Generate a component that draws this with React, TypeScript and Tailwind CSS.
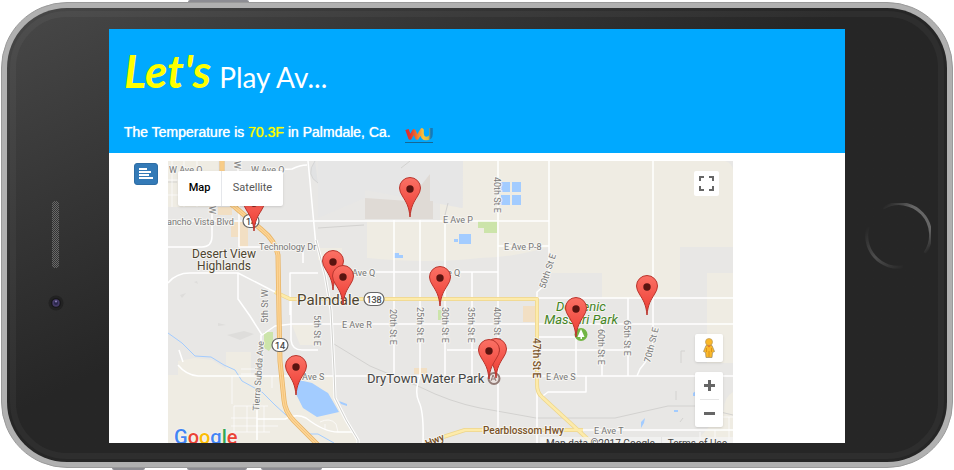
import React from "react";

type Point = [number, number];

const pins: Point[] = [
  [254, 231],
  [410, 217],
  [333, 290],
  [343, 305],
  [440, 306],
  [647, 315],
  [576, 337],
  [296, 395],
  [496, 378],
  [489, 379],
];

type Label = { text: string; x: number; y: number; size?: number; angle?: number; fill?: string; anchor?: "start" | "middle"; weight?: number };

const labels: Label[] = [
  { text: "W Ave O", x: 169, y: 173 },
  { text: "W Ave O", x: 251, y: 173 },
  { text: "W", x: 234, y: 161, angle: 90 },
  { text: "W", x: 209, y: 206, angle: 90 },
  { text: "ancho Vista Blvd", x: 167, y: 225 },
  { text: "Technology Dr", x: 259, y: 250 },
  { text: "E Ave P", x: 443, y: 223 },
  { text: "E Ave P-8", x: 504, y: 250 },
  { text: "Ave Q", x: 352, y: 276 },
  { text: "e Q", x: 447, y: 276 },
  { text: "E Ave R", x: 342, y: 328 },
  { text: "Ave S", x: 302, y: 380 },
  { text: "E Ave S", x: 546, y: 380 },
  { text: "E Ave T", x: 594, y: 434 },
  { text: "5th St W", x: 268, y: 323, angle: -90 },
  { text: "Tierra Subida Ave", x: 259, y: 411, angle: -86 },
  { text: "5th St E", x: 314, y: 315, angle: 90 },
  { text: "20th St E", x: 390, y: 309, angle: 90 },
  { text: "25th St E", x: 417, y: 307, angle: 90 },
  { text: "30th St E", x: 442, y: 307, angle: 90 },
  { text: "35th St E", x: 468, y: 307, angle: 90 },
  { text: "40th St E", x: 494, y: 307, angle: 90 },
  { text: "40th St E", x: 494, y: 177, angle: 90 },
  { text: "50th St E", x: 545, y: 289, angle: -72 },
  { text: "60th St E", x: 598, y: 329, angle: 90 },
  { text: "65th St E", x: 624, y: 320, angle: 90 },
  { text: "70th St E", x: 650, y: 363, angle: -76 },
  { text: "47th St E", x: 533, y: 338, angle: 90, fill: "#7a5226", size: 10, weight: 500 },
  { text: "Pearblossom Hwy", x: 483, y: 434, fill: "#7a5226", size: 10, weight: 500 },
  { text: "Hwy", x: 427, y: 447, angle: -22, fill: "#7a5226", size: 10, weight: 500 },
  { text: "Desert View", x: 224, y: 258, size: 12, fill: "#4e4530", anchor: "middle" },
  { text: "Highlands", x: 224, y: 270, size: 12, fill: "#4e4530", anchor: "middle" },
  { text: "Palmdale", x: 297, y: 305, size: 15, fill: "#4e4530" },
  { text: "DryTown Water Park", x: 367, y: 383, size: 13, fill: "#444444" },
];

const whiteRoads = [
  "M168 221H549",
  "M212 205V236Q212 247 202 247H168",
  "M239 205V247H264",
  "M168 283Q176 273 190 273H238L275 292L290 299",
  "M238 273V299L250 316L262 335L275 326L292 324H733",
  "M238 161V171M268 170L292 169Q300 165 307 165",
  "M308 161L316 246",
  "M303 247V263M290 315V273H318M291 299V340Q292 350 302 350H318",
  "M350 272H498M498 246H549M537 298H733M447 350H630",
  "M262 376H733M583 430H733",
  "M394 220V376M420 220V376M445 220V376M472 272V376M498 161V428",
  "M549 161V272Q548 284 537 292V443",
  "M576 334V376M537 337H576M602 324V376M628 298V376",
  "M653 161V342Q651 357 640 369L637 376",
  "M586 376V392H548L540 398",
  "M261 335V376M257 410V440M257 419H285Q296 413 306 418Q324 432 338 432H353",
  "M420 376Q414 392 419 402Q424 412 423 443",
  "M178 365Q186 375 198 376H262M179 350L183 362",
];

const thinRoads = [
  "M172 161V207M184 161V207M197 161V207M168 180H213M168 195H213",
  "M231 418H257M231 426H278M231 432H270M234 406V432M247 406V432M264 406V432M234 406H268",
  "M272 376V388M241 369H260M241 374H260M232 376V404",
  "M700 443V432M729 417V443M715 430V443M718 417H733",
  "M320 422Q330 417 336 424L338 432M325 424V429",
];

const railroad = "M316 240L325 275L331 310L334 370L335 398L346 420L358 440V451";
const arterial = "M275 292L290 299H537V384Q537 393 542 397L592 443M443 437L465 430H583";
const freeway = "M222 161V188Q223 199 236 208L262 230Q275 240 278 255L279 315L280 361L284 400Q285 412 294 421L318 445";

function Pin({ x, y }: { x: number; y: number }) {
  return (
    <g transform={`translate(${x} ${y})`}>
      <path
        d="M0 0C-1 -11 -4 -15 -7 -20Q-10.500 -25 -10.500 -29A10.500 10.500 0 1 1 10.500 -29Q10.500 -25 7 -20C4 -15 1 -11 0 0Z"
        fill="url(#pinFill)"
        stroke="#b9352d"
      />
      <circle cy="-28" r="3.700" fill="#5a1410" />
    </g>
  );
}

function Shield({ x, y, text, w }: { x: number; y: number; text: string; w: number }) {
  return (
    <g>
      <rect x={x - w / 2} y={y - 6.5} width={w} height="13" rx="6.500" fill="#fff" stroke="#666" strokeWidth="1.200" />
      <text x={x} y={y + 3.5} textAnchor="middle" fontSize="9" fill="#444" stroke="#444" strokeWidth=".2">{text}</text>
    </g>
  );
}

function MapDrawing() {
  return (
    <svg
      className="block h-full w-full font-['Roboto',sans-serif]"
      viewBox="168 161 565 290"
      preserveAspectRatio="xMidYMin slice"
      role="img"
      aria-label="Map of Palmdale with park locations"
    >
      <defs>
        <linearGradient id="pinFill" x1="0" y1="0" x2="0" y2="1">
          <stop offset="0" stopColor="#fb7165" />
          <stop offset="1" stopColor="#ec3a31" />
        </linearGradient>
      </defs>
      <rect x="168" y="161" width="565" height="290" fill="#e8e7e5" />
      <g fill="#efece3">
        <path d="M168 161H218V207H168Z" />
        <path d="M178 361L195 358L212 360L226 369V352H251V376H334L336 400L346 420L358 443V451H168V375H178Z" />
        <path d="M463 161H733V298H602V273H549V247Q510 258 480 258Q430 264 367 258V222H440V203L463 208Z" />
        <path d="M707 298H733V363H707ZM733 392Q724 397 724 410L700 437V443H733Z" />
        <path d="M292 325H318V345H300Z M318 248H342V260H318Z" />
      </g>
      <path d="M680 247H733V273H707V298H680ZM725 161H733V170Q732 163 725 161Z" fill="#e8e7e5" />
      <path d="M318 161H463L462 208L365 190V198L318 218Z" fill="#e6e6e6" />
      <path d="M365 198L409 201L430 174V201H433V219H365Z" fill="#dfdad5" />
      <path d="M315 161Q305 175 318 183" fill="#e1e2e3" stroke="#d5d5d5" />
      <g fill="#f2dfc3">
        <path d="M218 207H232V215H218ZM231 222H248V247H239V237H231Z" />
        <path d="M414 368H427V374H414ZM523 306H536V322H523Z" />
      </g>
      <path d="M264 332H273V345L269 351L264 348ZM478 221H497V233H484V228H478ZM438 310H442V320H438Z" fill="#cce4aa" />
      <g fill="#a3ccff">
        <path d="M501 182H510V192H501ZM512 182H521V192H512ZM501 195H510V205H501ZM512 195H521V205H512Z" />
        <path d="M459 234H471V244H459ZM454 239H458V242H454ZM394 253H399V255H403V258H394Z" />
        <path d="M299 380L312 383L323 390L328 393L339 412L317 417L303 408L296 394Z" />
        <path d="M339 401L347 404V406L341 404Z" />
        <path d="M674 410H678V412H674ZM693 393L696 391V396H693ZM641 422L645 418L644 423L641 428Z" />
      </g>
      <path d="M168 333L182 343L195 356L211 357L224 365L235 370L242 381L262 392L275 405L286 415L300 424L310 434L318 434L334 443" fill="none" stroke="#a3ccff" />
      <g fill="#dedddb">
        <path d="M227 335L244 331L254 334L240 340ZM218 323L226 325L218 326ZM180 295L186 293L182 298ZM194 282L197 281L198 284Z" />
      </g>
      <g fill="none" stroke="#d3d2d0">
        <path d="M168 182H177M401 168L410 161M318 228L364 225M444 219L448 203" />
        <path d="M334 344L370 366L420 387Q450 402 480 408L536 418H615L668 406H695L733 415" />
        <path d="M681 363V351H685M676 391V400M680 422L683 418" />
      </g>
      <g fill="none" stroke="#fff">
        {thinRoads.map((d) => <path key={d} d={d} strokeWidth=".7" />)}
        {whiteRoads.map((d) => <path key={d} d={d} strokeWidth="1.500" strokeLinejoin="round" />)}
      </g>
      <path d={railroad} fill="none" stroke="#fff" strokeWidth="3" />
      <path d={railroad} fill="none" stroke="#cfcfcc" />
      <g fill="none" strokeLinejoin="round">
        <path d={arterial} stroke="#ecd58c" strokeWidth="4" />
        <path d={arterial} stroke="#fdebaa" strokeWidth="2.500" />
        <path d={freeway} stroke="#e8b568" strokeWidth="5" />
        <path d={freeway} stroke="#fdd596" strokeWidth="3.400" />
        <path d={freeway} stroke="#eeb969" strokeWidth=".6" />
      </g>
      <g paintOrder="stroke" stroke="#f5f4f1" strokeWidth="2" strokeLinejoin="round">
        {labels.map((l) => (
          <text
            key={`${l.text}-${l.x}-${l.y}`}
            transform={`translate(${l.x} ${l.y}) rotate(${l.angle ?? 0})`}
            fontSize={l.size ?? 9}
            fontWeight={l.weight ?? 400}
            fill={l.fill ?? "#777777"}
            textAnchor={l.anchor ?? "start"}
          >
            {l.text}
          </text>
        ))}
        <g fill="#43841f" fontStyle="italic" fontSize="13" textAnchor="middle">
          <text x="581" y="311">Domenic</text>
          <text x="581" y="324">Massari Park</text>
        </g>
      </g>
      <Shield x={251} y={221} w={16} text="14" />
      <Shield x={280} y={345} w={16} text="14" />
      <Shield x={374} y={299} w={20} text="138" />
      <circle cx="581" cy="334.500" r="6.500" fill="#72b544" />
      <path d="M581 329L577.500 337H580.500V339H582V337H584.500Z" fill="#fff" />
      <circle cx="494" cy="378.500" r="5.500" fill="#e9e1de" stroke="#927b76" strokeWidth="2" />
      <path d="M491 381L493 375L496 381M492 379H496" fill="none" stroke="#927b76" />
      {pins.map(([x, y]) => <Pin key={`${x}-${y}`} x={x} y={y} />)}
    </svg>
  );
}

function ParkMap() {
  return (
    <div className="relative mr-28 h-[290px] min-w-0 flex-1 overflow-hidden font-['Roboto',sans-serif]">
      <MapDrawing />
      <div className="absolute top-[10px] left-[10px] flex h-[35px] rounded-xs bg-white text-[11px] shadow-sm">
        <button type="button" className="w-[44px] border-r border-gray-200 font-medium text-black">Map</button>
        <button type="button" className="w-[61px] text-[#565656]">Satellite</button>
      </div>
      <button type="button" aria-label="Toggle fullscreen" className="absolute top-[10px] right-[14px] flex size-[25px] items-center justify-center rounded-xs bg-white">
        <svg className="size-[15px]" viewBox="0 0 15 15" fill="none" stroke="#666" strokeWidth="2" aria-hidden="true">
          <path d="M1 5V1H5M10 1H14V5M14 10V14H10M5 14H1V10" />
        </svg>
      </button>
      <div className="absolute right-[10px] bottom-[24px] flex w-[28px] flex-col gap-[10px]">
        <button type="button" aria-label="Street View" className="flex h-[28px] items-center justify-center rounded-xs bg-white shadow-sm">
          <svg className="h-[20px] w-[12px]" viewBox="0 0 12 20" aria-hidden="true">
            <path d="M3 7.500Q6 6 9 7.500L11.500 13.500L9.500 14.500L9 19.500H3L2.500 14.500L.5 13.500Z" fill="#fbb829" stroke="#9c8a62" strokeWidth=".7" />
            <circle cx="6" cy="4" r="3.500" fill="#fbb829" stroke="#b89a5c" strokeWidth=".7" />
            <path d="M4 7.500H8L6 9.500Z" fill="#e67525" />
            <path d="M6 13V19M3.500 10V14M8.500 10V14" stroke="#d28a1b" strokeWidth=".8" />
          </svg>
        </button>
        <div className="flex h-[55px] flex-col items-center rounded-xs bg-white shadow-sm">
          <button type="button" aria-label="Zoom in" className="flex w-full flex-1 items-center justify-center">
            <svg className="size-[11px]" viewBox="0 0 11 11" stroke="#666" strokeWidth="3" aria-hidden="true"><path d="M0 5.500H11M5.500 0V11" /></svg>
          </button>
          <span className="h-px w-[19px] bg-[#e6e6e6]" />
          <button type="button" aria-label="Zoom out" className="flex w-full flex-1 items-center justify-center">
            <svg className="size-[11px]" viewBox="0 0 11 11" stroke="#666" strokeWidth="3" aria-hidden="true"><path d="M0 5.500H11" /></svg>
          </button>
        </div>
      </div>
      <a href="#google" aria-label="Google" className="absolute bottom-0 left-[6px] text-[20px] leading-[28px] font-medium [text-shadow:0_0_2px_white]">
        <span className="text-[#4285f4]">G</span><span className="text-[#ea4335]">o</span><span className="text-[#fbbc05]">o</span><span className="text-[#4285f4]">g</span><span className="text-[#34a853]">l</span><span className="text-[#ea4335]">e</span>
      </a>
      <div className="absolute right-0 bottom-0 flex h-[14px] bg-[#f5f5f5]/70 text-[10px] leading-[14px] text-[#444]">
        <span className="px-[6px]">Map data ©2017 Google</span>
        <a href="#terms" className="border-l border-[#e4e4e4] px-[6px]">Terms of Use</a>
      </div>
    </div>
  );
}

function AppScreen() {
  return (
    <main className="h-[414px] min-w-0 flex-1 overflow-hidden bg-white">
      <header className="h-[124px] bg-[#00a9ff] px-[15px] pt-3">
        <h1 className="flex items-baseline gap-2 font-['Lato',sans-serif] leading-[60px] whitespace-nowrap text-white">
          <span className="text-[46px] font-bold text-[#ffff00] italic">Let's</span>
          <span className="text-[28px]">Play Av...</span>
        </h1>
        <p className="mt-[13px] flex items-center gap-[14px] font-['Liberation_Sans',sans-serif] text-[14px] leading-[20px] text-white [text-shadow:0_0_1px_currentColor]">
          <span>The Temperature is <span className="text-[#ffff00]">70.3F</span> in Palmdale, Ca.</span>
          <svg className="mt-[6px] h-[18px] w-[28px]" viewBox="0 0 28 18" fill="none" role="img" aria-label="Weather Underground">
            <defs>
              <linearGradient id="wuWave" x1="0" x2="28" gradientUnits="userSpaceOnUse">
                <stop offset="0" stopColor="#d92b32" />
                <stop offset=".2" stopColor="#e2382f" />
                <stop offset=".4" stopColor="#f0702f" />
                <stop offset=".65" stopColor="#f9c33b" />
                <stop offset=".83" stopColor="#dcb83f" />
                <stop offset=".92" stopColor="#1479ba" />
              </linearGradient>
            </defs>
            <path d="M2 3.500L5 12L9 5L12 12L17 4V8Q17.500 12.500 21 12.500Q26 12.500 26 8V2" stroke="url(#wuWave)" strokeWidth="3.600" strokeLinejoin="round" />
            <path d="M0 16.500H28" stroke="#176794" />
          </svg>
        </p>
      </header>
      <div className="flex items-start gap-[10px] pt-2 pl-[25px]">
        <button type="button" aria-label="Show list" className="mt-[2px] flex h-[22px] w-[24px] items-center justify-center rounded-[3px] border border-[#2e6da4] bg-[#337ab7]">
          <svg className="h-[12px] w-[14px]" viewBox="0 0 14 12" fill="#fff" aria-hidden="true">
            <path d="M0 0H8V2H0ZM0 3H12V5H0ZM0 6H10V8H0ZM0 9H14V11H0Z" />
          </svg>
        </button>
        <ParkMap />
      </div>
    </main>
  );
}

export default function App() {
  return (
    <div className="overflow-hidden bg-white">
      <div className="flex h-[2px] pl-[188px]">
        <span className="w-[61px] rounded-t-xs bg-[#8d8d93]" />
      </div>
      <div className="mx-px rounded-[66px] border border-[#9a9a9a] bg-[#b0b0b0] p-[5px]">
        <div className="rounded-[60px] bg-linear-to-br from-[#484848] via-[#262626] via-45% to-[#262626] p-[3px]">
          <div className="flex rounded-[57px] border-[6px] border-white/4 pt-3 pb-[10px]">
            <div className="flex w-[93px] shrink-0 flex-col items-center gap-[27px] pt-[172px] pr-[14px]">
              <svg className="h-[67px] w-[7px] shrink-0" viewBox="0 0 7 67" aria-hidden="true">
                <defs>
                  <pattern id="grille" width="2" height="2" patternUnits="userSpaceOnUse">
                    <rect width="2" height="2" fill="#333" />
                    <path d="M0 0H1V1H0ZM1 1H2V2H1Z" fill="#696969" />
                  </pattern>
                </defs>
                <rect width="7" height="67" rx="3" fill="url(#grille)" />
              </svg>
              <svg className="size-[16px] shrink-0" viewBox="0 0 16 16" aria-hidden="true">
                <circle cx="8" cy="8" r="7.500" fill="#222" />
                <circle cx="8" cy="8" r="5" fill="#171719" />
                <circle cx="8" cy="8" r="3.700" fill="#443a67" />
                <circle cx="8" cy="8" r="2" fill="#29264a" />
                <circle cx="8" cy="6.500" r="1" fill="#8d83b8" />
              </svg>
            </div>
            <AppScreen />
            <div className="flex w-[93px] shrink-0 items-center justify-center pl-[12px]">
              <svg className="size-[66px]" viewBox="0 0 66 66" fill="none" strokeWidth="3" aria-hidden="true">
                <defs>
                  <linearGradient id="homeBright" x1="18" y1="4" x2="60" y2="52" gradientUnits="userSpaceOnUse">
                    <stop offset="0" stopColor="#262626" />
                    <stop offset=".3" stopColor="#666" />
                    <stop offset=".75" stopColor="#666" />
                    <stop offset="1" stopColor="#262626" />
                  </linearGradient>
                  <linearGradient id="homeDim" x1="2" y1="24" x2="40" y2="64" gradientUnits="userSpaceOnUse">
                    <stop offset="0" stopColor="#262626" />
                    <stop offset=".5" stopColor="#4d4d4d" />
                    <stop offset="1" stopColor="#262626" />
                  </linearGradient>
                </defs>
                <path d="M18 5A31.500 31.500 0 0 1 60 50" stroke="url(#homeBright)" />
                <path d="M3 24A31.500 31.500 0 0 0 38 64" stroke="url(#homeDim)" />
              </svg>
            </div>
          </div>
        </div>
      </div>
      <div className="flex h-[2px] pl-[112px]">
        <span className="w-[33px] rounded-b-xs bg-[#8d8d93]" />
        <span className="ml-[42px] w-[60px] rounded-b-xs bg-[#8d8d93]" />
        <span className="ml-[14px] w-[61px] rounded-b-xs bg-[#8d8d93]" />
      </div>
    </div>
  );
}
